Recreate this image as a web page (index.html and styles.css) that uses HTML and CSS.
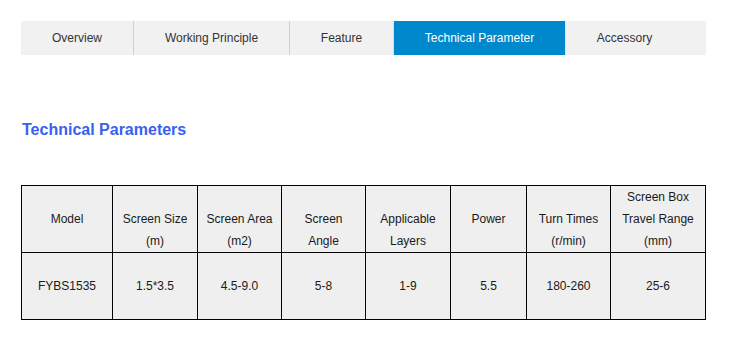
FILE: index.html
```html
<!DOCTYPE html>
<html>
<head>
<meta charset="utf-8">
<link rel="stylesheet" href="styles.css">
</head>
<body>
<div class="page">
  <nav class="tabs">
    <div class="tab w1">Overview</div>
    <div class="tab w2">Working Principle</div>
    <div class="tab w3">Feature</div>
    <div class="tab w4 active">Technical Parameter</div>
    <div class="tab w5">Accessory</div>
  </nav>
  <h2 class="title">Technical Parameters</h2>
  <table class="params">
    <colgroup>
      <col class="c1"><col class="c2"><col class="c3"><col class="c4"><col class="c5"><col class="c6"><col class="c7"><col class="c8">
    </colgroup>
    <tr class="head">
      <td class="pad">Model</td>
      <td class="pad">Screen Size<br>(m)</td>
      <td class="pad">Screen Area<br>(m2)</td>
      <td class="pad">Screen<br>Angle</td>
      <td class="pad">Applicable<br>Layers</td>
      <td class="pad">Power</td>
      <td class="pad">Turn Times<br>(r/min)</td>
      <td>Screen Box<br>Travel Range<br>(mm)</td>
    </tr>
    <tr class="body">
      <td>FYBS1535</td>
      <td>1.5*3.5</td>
      <td>4.5-9.0</td>
      <td>5-8</td>
      <td>1-9</td>
      <td>5.5</td>
      <td>180-260</td>
      <td>25-6</td>
    </tr>
  </table>
</div>
</body>
</html>
```

FILE: styles.css
```css
html, body {
  margin: 0;
  padding: 0;
  background: #fff;
}
body {
  font-family: "Liberation Sans", Arial, sans-serif;
  font-size: 12px;
  color: #222;
}
.page {
  padding: 21px 0 0 21px;
}
.tabs {
  display: flex;
  width: 685px;
  height: 34px;
  background: #f1f1f1;
}
.tab {
  display: flex;
  align-items: center;
  justify-content: center;
  color: #333;
  font-size: 12px;
  border-left: 1px solid #cfcfcf;
  box-sizing: border-box;
}
.tab.w1 { width: 112px; border-left: none; }
.tab.w2 { width: 156px; }
.tab.w3 { width: 104px; }
.tab.w4 { width: 172px; }
.tab.w5 { width: 118px; border-left-color: #e4e4e4; }
.tab.active {
  background: #0088cc;
  color: #fff;
  border-left: 1px solid #dcdcdc;
}
.title {
  margin: 0;
  padding-top: 66px;
  padding-left: 1px;
  font-size: 16px;
  line-height: 18px;
  font-weight: bold;
  color: #3a5ff2;
}
.params {
  margin-top: 46px;
  border-collapse: collapse;
  background: #efefef;
  table-layout: fixed;
  width: 685px;
}
.params td {
  border: 1px solid #000;
  text-align: center;
  padding: 0;
  line-height: 22px;
  color: #1a1a1a;
}
.head td {
  vertical-align: top;
}
.head td.pad {
  padding-top: 22px;
}
.body td {
  vertical-align: middle;
  height: 66px;
}
.c1 { width: 91px; }
.c2 { width: 85px; }
.c3 { width: 84px; }
.c4 { width: 84px; }
.c5 { width: 85px; }
.c6 { width: 76px; }
.c7 { width: 84px; }
.c8 { width: 95px; }
```
